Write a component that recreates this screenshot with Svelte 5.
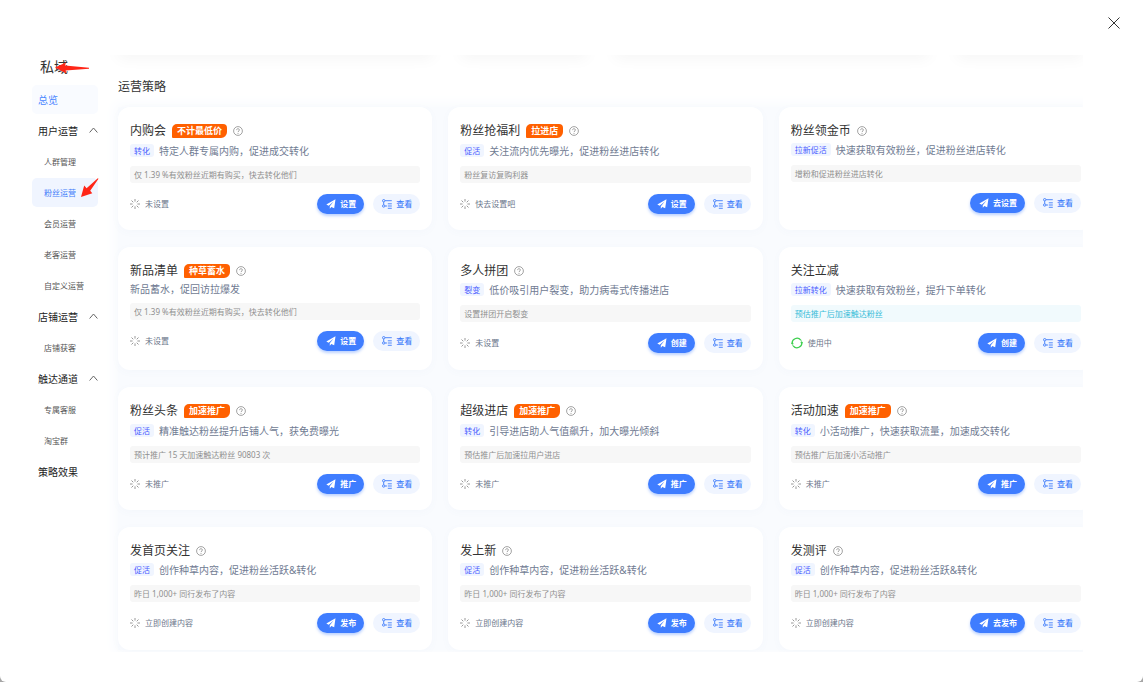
<script>
  const menu = [
    { text: '总览', kind: 'top', soft: true },
    { text: '用户运营', kind: 'group' },
    { text: '人群管理', kind: 'sub' },
    { text: '粉丝运营', kind: 'sub', active: true },
    { text: '会员运营', kind: 'sub' },
    { text: '老客运营', kind: 'sub' },
    { text: '自定义运营', kind: 'sub' },
    { text: '店铺运营', kind: 'group' },
    { text: '店铺获客', kind: 'sub' },
    { text: '触达通道', kind: 'group' },
    { text: '专属客服', kind: 'sub' },
    { text: '淘宝群', kind: 'sub' },
    { text: '策略效果', kind: 'top' }
  ];

  const cards = [
    { title: '内购会', tag: '不计最低价', help: true, label: '转化', desc: '特定人群专属内购，促进成交转化', note: '仅 1.39 %有效粉丝近期有购买，快去转化他们', status: '未设置', action: '设置' },
    { title: '粉丝抢福利', tag: '拉进店', help: true, label: '促活', desc: '关注流内优先曝光，促进粉丝进店转化', note: '粉丝复访复购利器', status: '快去设置吧', action: '设置' },
    { title: '粉丝领金币', help: true, label: '拉新促活', desc: '快速获取有效粉丝，促进粉丝进店转化', note: '增粉和促进粉丝进店转化', status: '', action: '去设置' },
    { title: '新品清单', tag: '种草蓄水', help: true, desc: '新品蓄水，促回访拉爆发', note: '仅 1.39 %有效粉丝近期有购买，快去转化他们', status: '未设置', action: '设置' },
    { title: '多人拼团', help: true, label: '裂变', desc: '低价吸引用户裂变，助力病毒式传播进店', note: '设置拼团开启裂变', status: '未设置', action: '创建' },
    { title: '关注立减', label: '拉新转化', desc: '快速获取有效粉丝，提升下单转化', note: '预估推广后加速触达粉丝', live: true, status: '使用中', action: '创建' },
    { title: '粉丝头条', tag: '加速推广', help: true, label: '促活', desc: '精准触达粉丝提升店铺人气，获免费曝光', note: '预计推广 15 天加速触达粉丝 90803 次', status: '未推广', action: '推广' },
    { title: '超级进店', tag: '加速推广', help: true, label: '转化', desc: '引导进店助人气值飙升，加大曝光倾斜', note: '预估推广后加速拉用户进店', status: '未推广', action: '推广' },
    { title: '活动加速', tag: '加速推广', help: true, label: '转化', desc: '小活动推广，快速获取流量，加速成交转化', note: '预估推广后加速小活动推广', status: '未推广', action: '推广' },
    { title: '发首页关注', help: true, label: '促活', desc: '创作种草内容，促进粉丝活跃&转化', note: '昨日 1,000+ 同行发布了内容', status: '立即创建内容', action: '发布' },
    { title: '发上新', help: true, label: '促活', desc: '创作种草内容，促进粉丝活跃&转化', note: '昨日 1,000+ 同行发布了内容', status: '立即创建内容', action: '发布' },
    { title: '发测评', help: true, label: '促活', desc: '创作种草内容，促进粉丝活跃&转化', note: '昨日 1,000+ 同行发布了内容', status: '立即创建内容', action: '去发布' }
  ];
</script>

<div class="modal">
  <header>
    <button class="close" aria-label="关闭">
      <svg width="12" height="12" viewBox="0 0 12 12"><path d="M.5.5l11 11M11.5.5l-11 11" stroke="#333" stroke-width="1" fill="none" /></svg>
    </button>
  </header>

  <div class="body">
    <nav>
      <h1>
        私域
        <svg class="arrow-title" width="34" height="12" viewBox="0 0 34 12"><path d="M0 5.500L11 .5L10 3.500L34 5.800V6.700L10.500 8.500L11.500 11.500Z" fill="#ff2618" /></svg>
      </h1>
      <ul>
        {#each menu as item}
          <li>
            <a href="#menu" class={item.kind} class:soft={item.soft} class:active={item.active}>
              {item.text}
              {#if item.kind === 'group'}
                <svg width="9" height="6" viewBox="0 0 9 6"><path d="M.6 5.500L4.500 1L8.400 5.500" stroke="#666" fill="none" /></svg>
              {/if}
              {#if item.active}
                <svg class="arrow-item" width="18" height="20" viewBox="0 0 18 20"><path d="M0 19L3.200 7.500L5.600 10.300L16.800.2L17.500.8L9.200 12.800L11.300 15.200Z" fill="#ff2618" /></svg>
              {/if}
            </a>
          </li>
        {/each}
      </ul>
    </nav>

    <main>
      <div class="ghosts"><i class="wide"></i><i class="narrow"></i><i class="wide"></i><i class="narrow"></i></div>
      <h2>运营策略</h2>
      <div class="grid">
        {#each cards as c}
          <article>
            <div class="head" class:tagged={c.tag}>
              <h3>{c.title}</h3>
              {#if c.tag}<span class="tag">{c.tag}</span>{/if}
              {#if c.help}
                <svg class="help" width="10" height="10" viewBox="0 0 10 10" fill="none" stroke="#8b8b8b">
                  <circle cx="5" cy="5" r="4.400" stroke-width=".8" />
                  <path d="M3.600 4.100C3.600 2.200 6.400 2.300 6.400 4C6.400 5 5 5 5 6.100M5 7v.9" stroke-width=".8" />
                </svg>
              {/if}
            </div>
            <div class="desc">
              {#if c.label}<span class="label">{c.label}</span>{/if}
              <p>{c.desc}</p>
            </div>
            <div class="note" class:live={c.live}>{c.note}</div>
            <div class="foot">
              {#if c.live}
                <svg class="ring" width="12" height="12" viewBox="0 0 12 12" fill="none" stroke="#3fcf50" stroke-width="1.200">
                  <path d="M1.300 7A4.800 4.800 0 0 1 9.800 3.100M10.700 5A4.800 4.800 0 0 1 2.200 8.900" />
                  <path d="M9.800 3.100A4.800 4.800 0 0 1 10.700 5M2.200 8.900A4.800 4.800 0 0 1 1.300 7" opacity=".6" />
                  <path d="M9.300 5.200L12 5L10.700 7.500ZM2.700 6.800L0 7L1.300 4.500Z" fill="#3fcf50" stroke="none" />
                </svg>
              {:else if c.status}
                <svg width="10" height="10" viewBox="0 0 10 10" fill="none" stroke="#8c8c8c" stroke-width=".9">
                  <path d="M5 0v2.600M5 7.400V10M0 5h2.600M7.400 5H10M1.500 1.500l1.800 1.800M6.700 6.700l1.800 1.800M8.500 1.500L6.700 3.300M3.300 6.700L1.500 8.500" />
                </svg>
              {/if}
              <span class="status">{c.status}</span>
              <button class="primary">
                <svg width="10" height="10" viewBox="0 0 10 10" fill="#fff"><path d="M9.500.3L.3 5.400L2.700 6.700L7.600 2.600L3.800 7.200V9.800L5.300 8L8.200 9.200Z" /></svg>
                <span>{c.action}</span>
              </button>
              <button class="view">
                <svg width="10" height="10" viewBox="0 0 10 10" fill="none" stroke="#3f7dfa" stroke-width=".9">
                  <circle cx="1.700" cy="1.700" r="1.200" /><circle cx="1.700" cy="7" r="1.200" />
                  <path d="M3 1.700H9.800M1.700 2.900v2.900M3 7h2M5.800 4.800H9.800M5.800 7h4M5.800 9.300H9.800" />
                </svg>
                <span>查看</span>
              </button>
            </div>
          </article>
        {/each}
      </div>
    </main>
  </div>
</div>

<style>
  :global(body) {
    background: #a6a6a6;
  }
  .modal {
    box-sizing: border-box;
    min-height: 100vh;
    padding: 0 60px 30px 32px;
    background: #fff;
    border-radius: 0 0 6px 6px;
    font-family: 'Noto Sans', 'Noto Sans CJK SC', sans-serif;
    color: #333;
  }
  h1, h2, h3, p, ul {
    margin: 0;
    padding: 0;
    font-weight: 400;
  }
  button {
    border: 0;
    padding: 0;
    font-family: inherit;
    cursor: pointer;
  }
  svg {
    flex: none;
    display: block;
  }
  header {
    display: flex;
    justify-content: flex-end;
    height: 55px;
    margin-right: -37px;
  }
  .close {
    align-self: flex-start;
    margin-top: 17px;
    background: none;
  }
  .body {
    display: flex;
    gap: 4px;
  }
  nav {
    flex: none;
    width: 66px;
  }
  h1 {
    position: relative;
    padding: 2px 0 8px 8px;
    font-size: 14px;
    line-height: 20px;
  }
  .arrow-title {
    position: absolute;
    left: 23px;
    top: 7px;
  }
  ul {
    list-style: none;
    display: grid;
    gap: 2px;
  }
  nav a {
    position: relative;
    box-sizing: border-box;
    display: flex;
    align-items: center;
    justify-content: space-between;
    height: 29px;
    padding: 0 0 1px 6px;
    border-radius: 5px;
    font-size: 10px;
    color: #222;
    text-decoration: none;
  }
  nav a.sub {
    padding-left: 12px;
    font-size: 8px;
    color: #555;
  }
  nav a.soft {
    background: #f9fbff;
    color: #4a86ff;
  }
  nav a.active {
    background: #f0f5ff;
    color: #3f7dfa;
  }
  .arrow-item {
    position: absolute;
    left: 49px;
    top: 0;
  }
  main {
    flex: 1;
    min-width: 0;
    overflow: hidden;
    padding: 0 0 2px 16px;
  }
  .ghosts {
    display: flex;
    gap: 28px;
    height: 10px;
    margin: -10px 0 0;
  }
  .ghosts i {
    box-shadow: 0 2px 16px rgba(0, 0, 0, 0.06);
  }
  .wide {
    flex: 5;
  }
  .narrow {
    flex: 2;
  }
  h2 {
    padding: 24px 0 12px;
    font-size: 12px;
    line-height: 16px;
  }
  .grid {
    display: grid;
    grid-template-columns: repeat(3, 1fr);
    grid-auto-rows: minmax(123px, auto);
    gap: 17px 16px;
    margin-right: -10px;
    background: #f9fbfe;
    box-shadow: 0 0 12px 4px #f9fbfe;
  }
  article {
    box-sizing: border-box;
    min-width: 0;
    padding: 16px 12px 15px;
    border-radius: 12px;
    background: #fff;
    box-shadow: 0 2px 8px rgba(90, 130, 190, 0.03);
  }
  .head {
    display: flex;
    align-items: center;
    gap: 6px;
    height: 15px;
    margin-bottom: 4px;
  }
  .head.tagged {
    margin-bottom: 5px;
  }
  h3 {
    font-size: 12px;
    line-height: 15px;
  }
  .tag {
    padding: 0 5px;
    border-radius: 5px 4px 6px 1px;
    background: #ff6000;
    color: #fff;
    font-size: 9px;
    font-weight: 700;
    line-height: 14px;
  }
  .desc {
    display: flex;
    align-items: center;
    gap: 5px;
  }
  .desc p {
    font-size: 10px;
    line-height: 12px;
    color: #707b92;
    white-space: nowrap;
  }
  .label {
    margin: 1px 0;
    padding: 0 4px;
    border-radius: 3px;
    background: #f0f5ff;
    color: #4a5cff;
    font-size: 8px;
    line-height: 13px;
  }
  .note {
    margin: 8px 0 11px;
    padding: 0 4px;
    border-radius: 3px;
    background: #f7f7f7;
    color: #8f8f8f;
    font-size: 8px;
    line-height: 17px;
  }
  .note.live {
    background: #f1fafd;
    color: #36bcd8;
  }
  .foot {
    display: flex;
    align-items: center;
    gap: 5px;
    height: 20px;
  }
  .status {
    flex: 1;
    padding-bottom: 2px;
    font-size: 8px;
    color: #6b758a;
  }
  .foot button {
    display: flex;
    align-items: center;
    gap: 4px;
    height: 20px;
    padding: 0 8px 0 9px;
    border-radius: 10px;
    font-size: 8px;
    font-weight: 700;
  }
  .foot button span {
    padding-bottom: 2px;
  }
  .foot .primary {
    margin-right: 4px;
    background: #3f7dff;
    color: #fff;
    box-shadow: 0 2px 3px rgba(63, 125, 255, 0.35);
  }
  .foot .view {
    background: #f0f5ff;
    color: #3f7dfa;
    font-weight: 500;
  }
</style>
